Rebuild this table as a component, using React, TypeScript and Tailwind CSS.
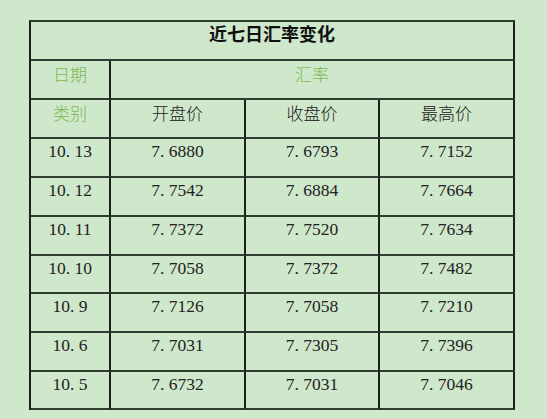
import React from "react";

const rows: [string, string, string, string][] = [
  ["10.13", "7.6880", "7.6793", "7.7152"],
  ["10.12", "7.7542", "7.6884", "7.7664"],
  ["10.11", "7.7372", "7.7520", "7.7634"],
  ["10.10", "7.7058", "7.7372", "7.7482"],
  ["10.9", "7.7126", "7.7058", "7.7210"],
  ["10.6", "7.7031", "7.7305", "7.7396"],
  ["10.5", "7.6732", "7.7031", "7.7046"],
];

function Num({ v }: { v: string }) {
  const i = v.indexOf(".");
  return (
    <span>
      {v.slice(0, i)}
      <span className="mr-[0.25em]">.</span>
      {v.slice(i + 1)}
    </span>
  );
}

const cell =
  "flex justify-center items-start border-r-2 border-b-2 border-r-[#1c211c] border-b-[#2f3d31]";
const cjk = "font-['Noto_Sans_CJK_SC','Noto_Sans',sans-serif]";
const num = "font-['Liberation_Serif','Noto_Sans_CJK_SC',serif]";

export default function App() {
  return (
    <div className="w-[547px] h-[419px] bg-[#cfe7cb] pt-[20px] pl-[29px]">
      <div className="grid w-[486px] grid-cols-[80px_135px_134px_135px] grid-rows-[39px_39px_39px_39px_39px_39px_38px_39px_39px_38px] border-l-2 border-t-2 border-l-[#1c211c] border-t-[#2f3d31]">
        <div
          className={`${cell} ${cjk} col-span-4 pt-[2px] text-[18px] leading-[18px] font-bold text-[#111]`}
        >
          近七日汇率变化
        </div>
        <div
          className={`${cell} ${cjk} pt-[4px] text-[17px] leading-[17px] font-light text-[#7ab850]`}
        >
          日期
        </div>
        <div
          className={`${cell} ${cjk} col-span-3 pt-[4px] text-[17px] leading-[17px] font-light text-[#7ab850]`}
        >
          汇率
        </div>
        <div
          className={`${cell} ${cjk} pt-[4px] text-[17px] leading-[17px] font-light text-[#7ab850]`}
        >
          类别
        </div>
        {["开盘价", "收盘价", "最高价"].map((h) => (
          <div
            key={h}
            className={`${cell} ${cjk} pt-[4px] text-[17px] leading-[17px] font-light text-[#222]`}
          >
            {h}
          </div>
        ))}
        {rows.map((r) =>
          r.map((v, j) => (
            <div
              key={r[0] + j}
              className={`${cell} ${num} pt-[2px] text-[17.5px] leading-[20px] text-[#222]`}
            >
              <Num v={v} />
            </div>
          ))
        )}
      </div>
    </div>
  );
}
